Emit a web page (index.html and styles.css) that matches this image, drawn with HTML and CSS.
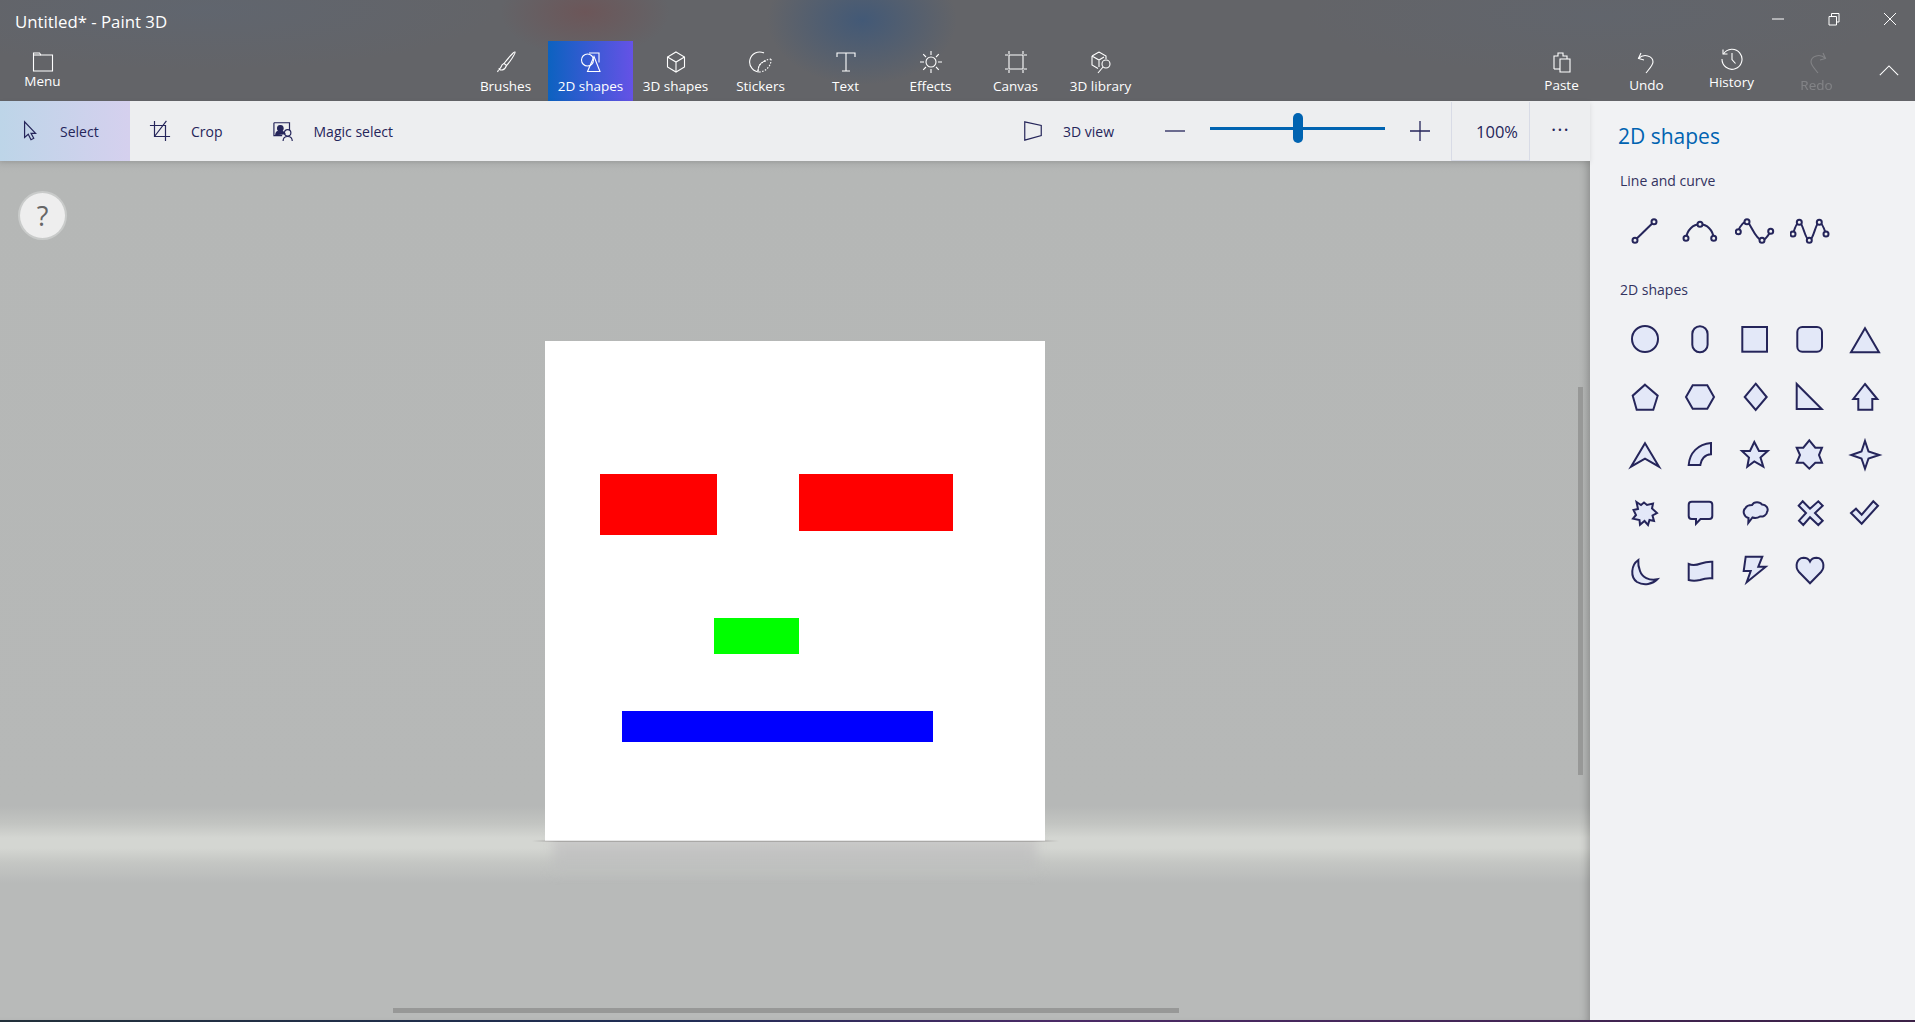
FILE: index.html
```html
<!DOCTYPE html>
<html lang="en">
<head>
<meta charset="UTF-8">
<title>Untitled* - Paint 3D</title>
<link rel="stylesheet" href="styles.css">
</head>
<body>

<header class="appbar">
  <div class="titlerow">
    <div class="apptitle">Untitled* - Paint 3D</div>
    <div class="winbtns">
      <svg class="winicon" viewBox="0 0 14 14"><path d="M1 7h12"/></svg>
      <svg class="winicon" viewBox="0 0 14 14"><path d="M2 4.500h7.500v8.500h-7.500zM4.500 4.500V1.500h7.500v8.500h-2.500"/></svg>
      <svg class="winicon" viewBox="0 0 14 14"><path d="M1 1l12 12M13 1L1 13"/></svg>
    </div>
  </div>
  <nav class="toolrow">
    <div class="tool tool-menu">
      <svg viewBox="0 0 24 24"><path d="M2.500 3h6l1.500 2h11.500v16h-19z"/><path d="M2.500 5h7.500"/></svg>
      <span>Menu</span>
    </div>
    <div class="toolgroup">
      <div class="tool">
        <svg viewBox="0 0 24 24"><path d="M21 2c1 1-6 11-8.500 13.500l-2.500-2C12 11 20 1 21 2z"/><path d="M10 13.500c-2 .5-2.500 2-3 3.500-.3 1-1 1.500-2 2 1.500 1.500 5.500 2 7.500-3.500"/><path d="M3.500 22l1-2"/></svg>
        <span>Brushes</span>
      </div>
      <div class="tool tool-active">
        <svg viewBox="0 0 24 24"><circle cx="8.500" cy="10" r="6"/><path d="M10 3h10v9.500"/><path d="M15 6.500l6 15h-12.500z"/></svg>
        <span>2D shapes</span>
      </div>
      <div class="tool">
        <svg viewBox="0 0 24 24"><path d="M12 2l8.500 5v10l-8.500 5-8.500-5V7z"/><path d="M3.500 7l8.500 5 8.500-5M12 12v10"/></svg>
        <span>3D shapes</span>
      </div>
      <div class="tool">
        <svg viewBox="0 0 24 24"><path d="M15 3a10 10 0 1 0-4 19"/><path d="M9 21c0-6 5-11 13-12M22 9c.5 6-4 12-11 13" stroke-dasharray="1.500 1.500"/><path d="M9 21c0-4 2-9 8-10"/></svg>
        <span>Stickers</span>
      </div>
      <div class="tool">
        <svg viewBox="0 0 24 24"><path d="M3 7V3h18v4M12 3v18M8 21h8"/></svg>
        <span>Text</span>
      </div>
      <div class="tool">
        <svg viewBox="0 0 24 24"><circle cx="12" cy="12" r="5"/><path d="M12 1v4M12 19v4M1 12h4M19 12h4M4.200 4.200l2.800 2.800M17 17l2.800 2.800M4.200 19.800L7 17M17 7l2.800-2.800"/></svg>
        <span>Effects</span>
      </div>
      <div class="tool">
        <svg viewBox="0 0 24 24"><path d="M5 5h14v14H5z"/><path d="M5 1v3M19 1v3M5 20v3M19 20v3M1 5h3M20 5h3M1 19h3M20 19h3"/></svg>
        <span>Canvas</span>
      </div>
      <div class="tool">
        <svg viewBox="0 0 24 24"><path d="M10 2l7 4v3M3 6l7-4M3 6v9l6 3.500M3 6l7 4 5-3M10 10v7"/><circle cx="17" cy="14" r="4"/><path d="M14 17l-5 6"/></svg>
        <span>3D library</span>
      </div>
    </div>
    <div class="toolgroup toolgroup-right">
      <div class="tool">
        <svg viewBox="0 0 24 24"><path d="M4 19V6h4V3h5v3h4v3"/><path d="M10 9h10v13H10z"/><path d="M4 19h6"/></svg>
        <span>Paste</span>
      </div>
      <div class="tool">
        <svg viewBox="0 0 24 24"><path d="M6 3L3.500 8.500 9 10"/><path d="M3.500 8.500C9 3 18 6 18 12c0 3-3 6-7 11"/></svg>
        <span>Undo</span>
      </div>
      <div class="tool tool-raised">
        <svg viewBox="0 0 24 24"><path d="M3.500 7A10 10 0 1 1 2 12"/><path d="M3 2.500V7h4.500"/><path d="M12 6v6.500l3.500 4"/></svg>
        <span>History</span>
      </div>
      <div class="tool tool-off">
        <svg viewBox="0 0 24 24"><path d="M18 3l2.500 5.500L15 10"/><path d="M20.500 8.500C15 3 6 6 6 12c0 3 3 6 7 11"/></svg>
        <span>Redo</span>
      </div>
      <div class="collapse">
        <svg viewBox="0 0 24 12"><path d="M2 11L12 1l10 10"/></svg>
      </div>
    </div>
  </nav>
</header>

<div class="workspace">
  <div class="editor">
    <div class="subbar">
      <div class="subbtn subbtn-on">
        <svg viewBox="0 0 20 24"><path d="M3 2v17l4-3.500 3 6 3-1.500-3-5.500h5z"/></svg>
        <span>Select</span>
      </div>
      <div class="subbtn">
        <svg viewBox="0 0 24 24"><path d="M1 6h17v17M6 1v17h17M19 1L6 18"/></svg>
        <span>Crop</span>
      </div>
      <div class="subbtn">
        <svg viewBox="0 0 24 24"><path d="M1 3h17v8M1 3v14h9"/><circle cx="8" cy="9" r="3" class="solid"/><path d="M3 16c0-3 2-4 5-4s4 1 5 3z" class="solid"/><circle cx="16" cy="14" r="3.500"/><path d="M11 23c0-3 2-5 5-5s5 2 5 5"/></svg>
        <span>Magic select</span>
      </div>
      <div class="subspacer"></div>
      <div class="subbtn viewbtn">
        <svg viewBox="0 0 24 24"><path d="M3 2l18 4v11L3 22z"/></svg>
        <span>3D view</span>
      </div>
      <svg class="zoomsign" viewBox="0 0 22 22"><path d="M1 11h20"/></svg>
      <div class="slider"><div class="thumb"></div></div>
      <svg class="zoomsign" viewBox="0 0 22 22"><path d="M1 11h20M11 1v20"/></svg>
      <div class="zoomvalue">100%</div>
      <div class="moredots">&#183;&#183;&#183;</div>
    </div>

    <main class="stage">
      <div class="floorshadow"></div>
      <div class="floorline"></div>
      <div class="helpbtn">?</div>
      <div class="sheet">
        <div class="blob blob-eye1"></div>
        <div class="blob blob-eye2"></div>
        <div class="blob blob-nose"></div>
        <div class="blob blob-mouth"></div>
      </div>
      <div class="scroll-v"></div>
      <div class="scroll-h"></div>
    </main>
  </div>

  <aside class="panel">
    <h1 class="panel-title">2D shapes</h1>
    <h2 class="panel-sub">Line and curve</h2>
    <div class="shapegrid linegrid">
      <svg viewBox="0 0 40 40"><path d="M10 29.300L29 10.700"/><circle class="dot" cx="10" cy="29.300" r="2.500"/><circle class="dot" cx="29" cy="10.700" r="2.500"/></svg>
      <svg viewBox="0 0 40 40"><path d="M6 27.300C7 19 13 13.300 20 13.300S33 19 33.700 27.300"/><circle class="dot" cx="6" cy="27.300" r="2.500"/><circle class="dot" cx="20" cy="13.300" r="2.500"/><circle class="dot" cx="33.700" cy="27.300" r="2.500"/></svg>
      <svg viewBox="0 0 40 40"><path d="M3.300 20.700C5 14 10 9 13 11.500S21 29 27 29.300C30 29.500 33 25 35.700 20.300"/><circle class="dot" cx="3.300" cy="20.700" r="2.500"/><circle class="dot" cx="12" cy="10.700" r="2.500"/><circle class="dot" cx="27" cy="29.300" r="2.500"/><circle class="dot" cx="35.700" cy="20.300" r="2.500"/></svg>
      <svg viewBox="0 0 40 40"><path d="M3 23C5 16 7 11.300 9.300 11.300 13 11.300 15 29.300 19.300 29.300S25.500 11.300 29.300 11.300C32 11.300 34 17 36 23"/><circle class="dot" cx="3" cy="23" r="2.500"/><circle class="dot" cx="9.300" cy="11.300" r="2.500"/><circle class="dot" cx="19.300" cy="29.300" r="2.500"/><circle class="dot" cx="29.300" cy="11.300" r="2.500"/><circle class="dot" cx="36" cy="23" r="2.500"/></svg>
    </div>
    <h2 class="panel-sub">2D shapes</h2>
    <div class="shapegrid">
      <svg viewBox="0 0 40 40"><circle cx="20" cy="20" r="13"/></svg>
      <svg viewBox="0 0 40 40"><rect x="12.300" y="7.300" width="15.300" height="26" rx="7.600"/></svg>
      <svg viewBox="0 0 40 40"><rect x="7.300" y="8" width="24.700" height="24.700"/></svg>
      <svg viewBox="0 0 40 40"><rect x="7.300" y="8" width="24.700" height="24.700" rx="5"/></svg>
      <svg viewBox="0 0 40 40"><path d="M20 9.300L34 33.300H6z"/></svg>

      <svg viewBox="0 0 40 40"><path d="M20 7.700L32.700 18.700 28.300 32.700H11.700L7.700 18.700z"/></svg>
      <svg viewBox="0 0 40 40"><path d="M6 20L12.700 8.300H27.300L34 20 27.300 31.700H12.700z"/></svg>
      <svg viewBox="0 0 40 40"><path d="M20.700 6.700L31.700 20 20.700 33 9.700 20z"/></svg>
      <svg viewBox="0 0 40 40"><path d="M6.700 7V32H31.700z"/></svg>
      <svg viewBox="0 0 40 40"><path d="M20 7L32.300 22H27.300V32.700H13.300V22H8.300z"/></svg>

      <svg viewBox="0 0 40 40"><path d="M20 8.300L34 31.700 20 23.700 6 31.700z"/></svg>
      <svg viewBox="0 0 40 40"><path d="M8.700 30C9.500 18 18 9 31 8V19.300C25 19.500 21 24 20.300 30z"/></svg>
      <svg viewBox="0 0 40 40"><path d="M19.300 7L24 16H32.700L25.500 22.500 28.300 31.700 19.300 26.500 12.300 31.700 14 22.500 7 16H15z"/></svg>
      <svg viewBox="0 0 40 40"><path d="M19.300 5.300L25.300 12.700H32L29 20 32 27.700H25.300L19.300 33.700 13.300 27.700H6.700L10 20 6.700 12.700H13.300z"/></svg>
      <svg viewBox="0 0 40 40"><path d="M20 6L23.500 16.500 34.300 20 23.500 23.500 20 33.700 16.500 23.500 6.300 20 16.500 16.500z"/></svg>

      <svg viewBox="0 0 40 40"><path d="M11.500 9L16 12 19 9.500 22 12 28 10.500 27 15.500 32 20 27.500 22.500 29 28 24.500 27 23 32 19.500 28 15 31.700 14.500 27 8 25.700 11 22 8.500 17 13 16z"/></svg>
      <svg viewBox="0 0 40 40"><path d="M11.700 8.700H29.300a3 3 0 0 1 3 3V23a3 3 0 0 1-3 3H20.500L16 30.700V26H11.700a3 3 0 0 1-3-3V11.700a3 3 0 0 1 3-3z"/></svg>
      <svg viewBox="0 0 40 40"><path d="M13.300 30L13.500 25C9 24 7 18 10.500 15 12 12 15 12 17 12 19 8 25 8.500 27 11.500 31 11.500 34 15.500 32 19 32 22 28 24 25 23.500 22 25.500 19 25 17.500 24.500z"/></svg>
      <svg viewBox="0 0 40 40"><path d="M12.700 8.300L20 15.700 28.300 8.300 32.700 12.700 25 20 32.700 27.700 28.300 32 20 24.300 13.300 32 9 27.700 16 20 8.700 12.700z"/></svg>
      <svg viewBox="0 0 40 40"><path d="M6 20L11 15.700 16.700 21.700 28.300 8.300 33 12.700 16.700 30.700z"/></svg>

      <svg viewBox="0 0 40 40"><path d="M13.300 9C6 14 5 26 12 31 19 35 28 33 32.300 28.300 24 30 17 26 15 20 13.500 16 13 12 13.300 9z"/></svg>
      <svg viewBox="0 0 40 40"><path d="M8.700 13C13 15 17 14 21 12.500 25 11 29 10.500 32.300 10.700V27.300C28 26.800 24 27.500 20 29 16 30 12 30 8.700 29z"/></svg>
      <svg viewBox="0 0 40 40"><path d="M10.700 5.700H27.300L23.300 15.700H30.700L11.700 31.300 15.700 20H8.700z"/></svg>
      <svg viewBox="0 0 40 40"><path d="M20 32.300L9 21C4.500 16 6.500 7 13.500 6.700 16.500 6.700 19 8.500 20 10.500 21 8.500 23.500 6.700 26.500 6.700 33.500 7 35.500 16 31 21z"/></svg>
    </div>
  </aside>
</div>

<div class="edge"></div>

</body>
</html>
```

FILE: styles.css
```css
html, body {
  height: 100%;
}

body {
  margin: 0;
  display: flex;
  flex-direction: column;
  overflow: hidden;
  font-family: "Open Sans", "Noto Sans", sans-serif;
  background: #b6b8b7;
}

/* top bar */
.appbar {
  height: 101px;
  flex: none;
  color: #fff;
  background-color: #636468;
  background-image:
    radial-gradient(ellipse 85px 45px at 585px 12px, rgba(125, 60, 60, 0.35), transparent),
    radial-gradient(ellipse 95px 65px at 862px 20px, rgba(40, 80, 130, 0.55), transparent),
    radial-gradient(ellipse 300px 60px at 200px 10px, rgba(90, 105, 125, 0.3), transparent),
    radial-gradient(ellipse 300px 60px at 1600px 15px, rgba(90, 105, 125, 0.2), transparent);
}

.titlerow {
  height: 41px;
  display: flex;
  justify-content: space-between;
  align-items: flex-start;
}

.apptitle {
  margin: 11px 0 0 15px;
  font-size: 16.8px;
  line-height: 22px;
}

.winbtns {
  display: flex;
}

.winicon {
  width: 14px;
  height: 14px;
  margin: 12px 18px 0 24px;
  fill: none;
  stroke: #fff;
  stroke-width: 1;
}

.toolrow {
  height: 60px;
  display: flex;
  position: relative;
}

.toolgroup {
  display: flex;
  margin-left: 378px;
}

.toolgroup-right {
  margin-left: auto;
}

.toolgroup-right .tool span {
  margin-top: 1px;
}

.tool {
  width: 85px;
  height: 60px;
  display: flex;
  flex-direction: column;
  align-items: center;
  font-size: 13.5px;
}

.tool svg {
  width: 24px;
  height: 24px;
  margin-top: 9px;
  fill: none;
  stroke: #fff;
  stroke-width: 1.1;
}

.tool span {
  line-height: 20px;
  margin-top: 2px;
}

.tool-menu span {
  margin-top: -3px;
}

.tool-active {
  background: linear-gradient(90deg, #0c62c0, #6552e6);
}

.tool-raised svg {
  margin-top: 6px;
}

.tool-off {
  opacity: 0.2;
}

.collapse {
  width: 56px;
  padding-left: 4px;
  box-sizing: border-box;
  display: flex;
  justify-content: center;
}

.collapse svg {
  width: 22px;
  height: 11px;
  margin-top: 24px;
  fill: none;
  stroke: #fff;
  stroke-width: 1.2;
}

/* work area */
.workspace {
  flex: 1;
  display: flex;
  min-height: 0;
}

.editor {
  flex: 1;
  display: flex;
  flex-direction: column;
  min-width: 0;
}

.subbar {
  height: 60px;
  flex: none;
  display: flex;
  align-items: center;
  background: #edeef0;
  color: #25255a;
  font-size: 14px;
  position: relative;
  z-index: 2;
  box-shadow: 0 2px 5px rgba(0, 0, 0, 0.1);
}

.subbtn {
  height: 60px;
  display: flex;
  align-items: center;
}

.subbtn svg {
  width: 22px;
  height: 22px;
  fill: none;
  stroke: #25255a;
  stroke-width: 1.3;
}

.subbtn .solid {
  fill: #25255a;
}

.subbtn:nth-child(1) {
  width: 130px;
  padding-left: 20px;
  box-sizing: border-box;
}

.subbtn:nth-child(1) span {
  margin-left: 18px;
}

.subbtn:nth-child(2) {
  margin-left: 19px;
}

.subbtn:nth-child(2) span {
  margin-left: 20px;
}

.subbtn:nth-child(3) {
  margin-left: 50px;
}

.subbtn:nth-child(3) span {
  margin-left: 19px;
}

.subbtn-on {
  background: linear-gradient(90deg, #bdd5e8, #d5d0ee);
}

.subspacer {
  flex: 1;
}

.viewbtn span {
  margin-left: 19px;
}

.zoomsign {
  width: 22px;
  height: 22px;
  fill: none;
  stroke: #25255a;
  stroke-width: 1.3;
}

.viewbtn {
  margin-right: 50px;
}

.slider {
  width: 175px;
  height: 3px;
  margin: -6px 24px 0 24px;
  background: #0063b1;
  position: relative;
}

.thumb {
  position: absolute;
  left: 83px;
  top: -14px;
  width: 10px;
  height: 30px;
  border-radius: 5px;
  background: #0063b1;
}

.zoomvalue {
  width: 79px;
  height: 59px;
  margin-left: 20px;
  border: 1px solid #d8dbe6;
  border-top: 0;
  padding-right: 11px;
  box-sizing: border-box;
  text-align: right;
  line-height: 59px;
  font-size: 16.5px;
}

.moredots {
  width: 60px;
  padding-left: 1px;
  box-sizing: border-box;
  text-align: center;
  font-size: 20px;
  letter-spacing: 1px;
  margin-top: -4px;
}

/* canvas */
.stage {
  flex: 1;
  position: relative;
  overflow: hidden;
  padding: 180px 0 0 545px;
  background-image: linear-gradient(180deg,
    #b1b3b2 0, #b5b7b6 12px, #b6b8b7 645px,
    #c2c4c1 662px, #d4d6d2 677px, #d4d6d2 687px,
    #c4c6c3 702px, #b8bab9 722px);
  box-shadow: inset -8px 0 8px -6px rgba(0, 0, 0, 0.25);
}

.floorshadow {
  position: absolute;
  left: 553px;
  top: 676px;
  width: 484px;
  height: 34px;
  background: linear-gradient(180deg, #c9c8c8, #bbbdbc);
  filter: blur(6px);
}

.floorline {
  position: absolute;
  left: 532px;
  top: 679px;
  width: 527px;
  height: 2px;
  background: linear-gradient(90deg, transparent, #a9a8a6 5%, #a9a8a6 95%, transparent);
}

.sheet {
  width: 500px;
  height: 500px;
  background: #fff;
  position: relative;
  box-shadow: inset 0 -1px 0 #e6e6e6;
}

.blob {
  position: absolute;
}

.blob-eye1 {
  left: 55px;
  top: 133px;
  width: 117px;
  height: 61px;
  background: #f00;
}

.blob-eye2 {
  left: 254px;
  top: 133px;
  width: 154px;
  height: 57px;
  background: #f00;
}

.blob-nose {
  left: 169px;
  top: 277px;
  width: 85px;
  height: 36px;
  background: #0f0;
}

.blob-mouth {
  left: 77px;
  top: 370px;
  width: 311px;
  height: 31px;
  background: #00f;
}

.helpbtn {
  position: absolute;
  left: 20px;
  top: 32px;
  width: 45px;
  height: 45px;
  border-radius: 50%;
  background: #eeeeee;
  box-shadow: 0 0 0 2px #c9cbca;
  color: #666;
  font-size: 27px;
  line-height: 45px;
  text-align: center;
}

.scroll-v {
  position: absolute;
  left: 1578px;
  top: 226px;
  width: 5px;
  height: 388px;
  background: #979897;
}

.scroll-h {
  position: absolute;
  left: 393px;
  top: 847px;
  width: 786px;
  height: 5px;
  background: #979897;
}

/* right panel */
.panel {
  width: 325px;
  flex: none;
  box-sizing: border-box;
  padding: 0 0 0 28px;
  background: #f1f2f4;
  color: #25255a;
}

.panel-title {
  margin: 21px 0 0 0;
  font-size: 21px;
  line-height: 28px;
  font-weight: 400;
  color: #0063b1;
}

.panel-sub {
  margin: 21px 0 0 2px;
  font-size: 14px;
  line-height: 20px;
  font-weight: 400;
  color: #33335f;
}

.shapegrid {
  display: grid;
  grid-template-columns: repeat(5, 55px);
  grid-auto-rows: 58px;
  margin-top: 10px;
}

.linegrid {
  height: 57px;
  margin-top: 11px;
}

.shapegrid svg {
  width: 40px;
  height: 40px;
  margin: 9px 0 0 7px;
  fill: #e3e8f8;
  stroke: #25255a;
  stroke-width: 2;
}

.shapegrid .dot {
  fill: #f1f2f4;
}

.linegrid svg {
  fill: none;
}

.edge {
  height: 2px;
  flex: none;
  background: linear-gradient(90deg, #22303a, #1f2d55 35%, #4a2a66 55%, #3b2146);
}
```
